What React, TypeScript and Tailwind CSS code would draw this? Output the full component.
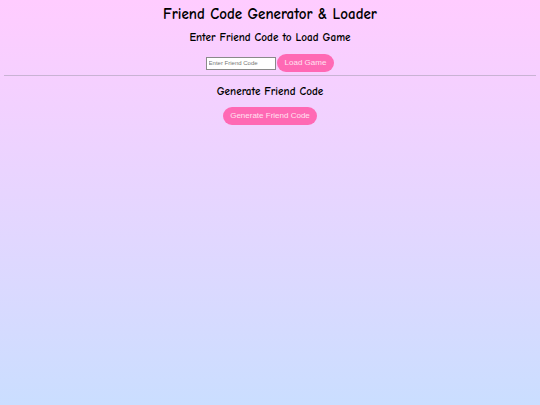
import { useState } from "react"

export default function App() {
  const [code, setCode] = useState("")

  return (
    <div
      className="min-h-screen w-full bg-gradient-to-b from-[#ffccff] to-[#cadeff] px-[4px] py-[1px] text-black"
      style={{ fontFamily: '"Comic Sans MS", "Comic Neue", cursive' }}
    >
      {/* Loader */}
      <h1 className="mt-[4px] text-center text-[15px] font-bold leading-[18px]">
        Friend Code Generator &amp; Loader
      </h1>
      <h2 className="mt-[8px] text-center text-[11.2px] font-bold leading-[14px]">
        Enter Friend Code to Load Game
      </h2>
      <div className="mt-[9px] flex items-center justify-center gap-[1px]">
        <input
          value={code}
          onChange={(e) => setCode(e.target.value)}
          placeholder="Enter Friend Code"
          className="h-[13px] w-[70px] border border-[#8a8a8a] bg-white px-[2px] text-[6px] placeholder:text-[#777]"
          style={{ fontFamily: '"Liberation Sans", Arial, sans-serif' }}
        />
        <button
          className="h-[18px] rounded-full bg-[#ff69b4] px-[8px] text-[8px] text-[#ffe2f1]"
          style={{ fontFamily: '"Liberation Sans", Arial, sans-serif' }}
        >
          Load Game
        </button>
      </div>

      <hr className="mt-[3px] border-t border-[#c9b3d4]" />

      {/* Generator */}
      <h2 className="mt-[9px] text-center text-[11.2px] font-bold leading-[14px]">
        Generate Friend Code
      </h2>
      <div className="mt-[8px] flex justify-center">
        <button
          className="h-[18px] rounded-full bg-[#ff69b4] px-[7px] text-[8px] text-[#ffe2f1]"
          style={{ fontFamily: '"Liberation Sans", Arial, sans-serif' }}
        >
          Generate Friend Code
        </button>
      </div>
    </div>
  )
}
